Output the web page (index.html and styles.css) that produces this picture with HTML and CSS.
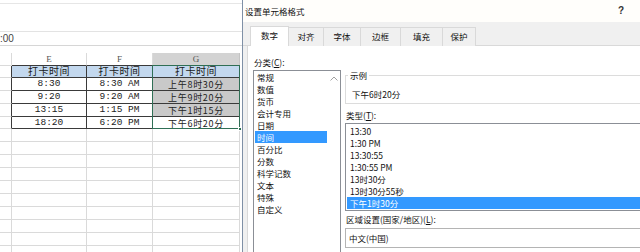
FILE: index.html
```html
<!DOCTYPE html>
<html lang="zh-CN">
<head>
<meta charset="utf-8">
<title>设置单元格格式</title>
<link rel="stylesheet" href="styles.css">
</head>
<body>
<div class="screen">
  <div class="sheet">
    <div class="ribbon"></div>
    <div class="fbar">:00</div>
    <div class="gap"></div>
    <div class="grid">
      <div class="c"></div><div class="c ch top">E</div><div class="c ch top">F</div><div class="c ch top gsel">G</div>
      <div class="c rh"></div><div class="c th">打卡时间</div><div class="c th">打卡时间</div><div class="c th">打卡时间</div>
      <div class="c rh"></div><div class="c td">8:30</div><div class="c td">8:30 AM</div><div class="c td cj shade">上午8时30分</div>
      <div class="c rh"></div><div class="c td">9:20</div><div class="c td">9:20 AM</div><div class="c td cj shade">上午9时20分</div>
      <div class="c rh"></div><div class="c td">13:15</div><div class="c td">1:15 PM</div><div class="c td cj shade">下午1时15分</div>
      <div class="c rh"></div><div class="c td">18:20</div><div class="c td">6:20 PM</div><div class="c td cj">下午6时20分</div>
      <div class="c"></div><div class="c"></div><div class="c"></div><div class="c"></div>
      <div class="c"></div><div class="c"></div><div class="c"></div><div class="c"></div>
      <div class="c"></div><div class="c"></div><div class="c"></div><div class="c"></div>
      <div class="c"></div><div class="c"></div><div class="c"></div><div class="c"></div>
      <div class="c"></div><div class="c"></div><div class="c"></div><div class="c"></div>
      <div class="c"></div><div class="c"></div><div class="c"></div><div class="c"></div>
      <div class="c"></div><div class="c"></div><div class="c"></div><div class="c"></div>
      <div class="c"></div><div class="c"></div><div class="c"></div><div class="c"></div>
      <div class="c"></div><div class="c"></div><div class="c"></div><div class="c"></div>
      <div class="c"></div><div class="c"></div><div class="c"></div><div class="c"></div>
      <div class="selection"><span class="handle"></span></div>
    </div>
  </div>

  <div class="dialog">
    <div class="title">
      <span>设置单元格格式</span>
      <span class="help">?</span>
    </div>
    <div class="tabs">
      <div class="tab active w1">数字</div>
      <div class="tab w2">对齐</div>
      <div class="tab w3">字体</div>
      <div class="tab w4">边框</div>
      <div class="tab w5">填充</div>
      <div class="tab w6">保护</div>
    </div>
    <div class="body">
      <div class="page">
        <div class="left">
          <div class="label">分类(<u>C</u>):</div>
          <div class="catlist">
            <div class="items">
              <div class="item">常规</div>
              <div class="item">数值</div>
              <div class="item">货币</div>
              <div class="item">会计专用</div>
              <div class="item">日期</div>
              <div class="item selected">时间</div>
              <div class="item">百分比</div>
              <div class="item">分数</div>
              <div class="item">科学记数</div>
              <div class="item">文本</div>
              <div class="item">特殊</div>
              <div class="item">自定义</div>
            </div>
            <div class="scroll">
              <svg width="8" height="5" viewBox="0 0 8 5"><path d="M0.5 4.5 L4 1 L7.5 4.5" fill="none" stroke="#a0a0a0" stroke-width="1"/></svg>
            </div>
          </div>
        </div>
        <div class="right">
          <fieldset class="sample">
            <legend>示例</legend>
            <div class="sample-text">下午6时20分</div>
          </fieldset>
          <div class="label type-label">类型(<u>T</u>):</div>
          <div class="typelist">
            <div class="titem">13:30</div>
            <div class="titem">1:30 PM</div>
            <div class="titem">13:30:55</div>
            <div class="titem">1:30:55 PM</div>
            <div class="titem">13时30分</div>
            <div class="titem">13时30分55秒</div>
            <div class="titem selected">下午1时30分</div>
          </div>
          <div class="label locale-label">区域设置(国家/地区)(<u>L</u>):</div>
          <div class="combo">中文(中国)</div>
        </div>
      </div>
    </div>
  </div>
</div>
</body>
</html>
```

FILE: styles.css
```css
* { box-sizing: border-box; margin: 0; padding: 0; }

body {
  margin: 0;
  width: 640px;
  height: 252px;
  overflow: hidden;
  background: #fff;
  font-family: "Noto Sans CJK SC", "Noto Sans", sans-serif;
  color: #1a1a1a;
}

.screen {
  display: flex;
  height: 252px;
}

/* ---------- spreadsheet ---------- */
.sheet {
  width: 242px;
  flex: none;
  display: flex;
  flex-direction: column;
  overflow: hidden;
}
.sheet > * { flex: none; }

.ribbon {
  margin-top: 3px;
  height: 29px;
  border-top: 1px solid #e6e6e6;
  border-bottom: 1px solid #e3e3e3;
}

.fbar {
  height: 14px;
  border-bottom: 1px solid #d6d6d6;
  font-family: "Liberation Sans", sans-serif;
  font-size: 10px;
  line-height: 13px;
  color: #444;
}

.gap { height: 7px; }

.grid {
  position: relative;
  display: grid;
  grid-template-columns: 12px 75px 66px 87px;
  grid-template-rows: 13px 12px 13px 13px 13px 12px repeat(10, 13px);
}

.c {
  border-right: 1px solid #dadada;
  border-bottom: 1px solid #dadada;
}

.ch {
  font-family: "Liberation Serif", serif;
  font-size: 9px;
  line-height: 12px;
  text-align: center;
  color: #555;
}
.ch.top { border-bottom-color: #3a3a3a; }
.gsel { background: #d3d3d3; border-right-color: #c4c4c4; }

.rh { border-right-color: #3a3a3a; }

.th {
  background: #c3d8ee;
  border-color: #3a3a3a;
  font-size: 10px;
  letter-spacing: 0.5px;
  line-height: 10px;
  text-align: center;
  color: #1a1a1a;
}

.td {
  border-color: #3a3a3a;
  font-family: "Liberation Mono", monospace;
  font-size: 9.5px;
  line-height: 12px;
  text-align: center;
  color: #222;
}
.td.cj {
  font-family: "Noto Sans CJK SC", sans-serif;
  font-size: 9px;
  letter-spacing: 0.7px;
  line-height: 13px;
}
.shade { background: #c9c9c9; }

.selection {
  position: absolute;
  left: 152px;
  top: 12px;
  width: 88px;
  height: 64px;
  border: 1px solid #2f6f55;
  pointer-events: none;
}
.handle {
  position: absolute;
  right: -3px;
  bottom: -3px;
  width: 4px;
  height: 4px;
  background: #2f6f55;
  border: 1px solid #fff;
}

/* ---------- dialog ---------- */
.dialog {
  flex: 1;
  display: flex;
  flex-direction: column;
  border-left: 1px solid #7f90a6;
  background: #f0f0f0;
  font-size: 8.5px;
  line-height: 12px;
  color: #111;
  overflow: hidden;
}

.title {
  height: 22px;
  flex: none;
  background: #fffefb;
  display: flex;
  justify-content: space-between;
  align-items: center;
  padding: 0 16px 0 2px;
  font-size: 8.5px;
}
.help {
  font-family: "Liberation Sans", sans-serif;
  font-size: 10px;
  font-weight: bold;
  color: #333;
}

.tabs {
  height: 24px;
  flex: none;
  display: flex;
  align-items: flex-end;
  padding-left: 7px;
  border-bottom: 1px solid #d9d9d9;
}
.tab {
  height: 19px;
  margin-bottom: -1px;
  border: 1px solid #d9d9d9;
  border-bottom: none;
  background: #f0f0f0;
  text-align: center;
  line-height: 17px;
}
.tab + .tab { margin-left: -1px; }
.tab.active {
  height: 20px;
  background: #fff;
  position: relative;
  z-index: 1;
}
.w1 { width: 39px; }
.w2 { width: 36px; }
.w3 { width: 38px; }
.w4 { width: 41px; }
.w5 { width: 43px; }
.w6 { width: 34px; }

.body {
  flex: 1;
  display: flex;
  padding-left: 4px;
}
.page {
  flex: 1;
  display: flex;
  gap: 4px;
  background: #fff;
  border-left: 1px solid #d9d9d9;
  padding-left: 5px;
}

.left {
  width: 88px;
  flex: none;
  display: flex;
  flex-direction: column;
}
.label {
  line-height: 12px;
  padding-left: 1px;
}
.left .label { margin-top: 10px; }

.catlist {
  margin-top: 2px;
  height: 200px;
  flex: none;
  border: 1px solid #8b8f96;
  display: flex;
}
.items {
  flex: 1;
  padding: 0 1px 0 1px;
}
.item {
  height: 12px;
  padding-left: 2px;
}
.item.selected {
  background: #3399ff;
  color: #fff;
}
.scroll {
  width: 12px;
  flex: none;
  display: flex;
  justify-content: center;
  padding-top: 5px;
}

.right {
  flex: 1;
  display: flex;
  flex-direction: column;
  padding-top: 23px;
}
.right > * { flex: none; }

.sample {
  border: 1px solid #dcdcdc;
  border-right: none;
  padding: 7px 0 3px 6px;
}
.sample legend {
  padding: 0 2px;
  margin-left: -4px;
  line-height: 12px;
}
.sample-text { line-height: 12px; }

.type-label { margin-top: 5px; }

.typelist {
  margin-top: 2px;
  border: 1px solid #8b8f96;
  border-right: none;
  padding: 1px 0 1px 1px;
}
.titem {
  height: 12px;
  padding-left: 3px;
}
.titem.selected {
  background: #3399ff;
  color: #fff;
}

.locale-label { margin-top: 2px; }

.combo {
  margin-top: 3px;
  height: 20px;
  border: 1px solid #b4b4b4;
  border-right: none;
  padding-left: 3px;
  line-height: 18px;
}
```
